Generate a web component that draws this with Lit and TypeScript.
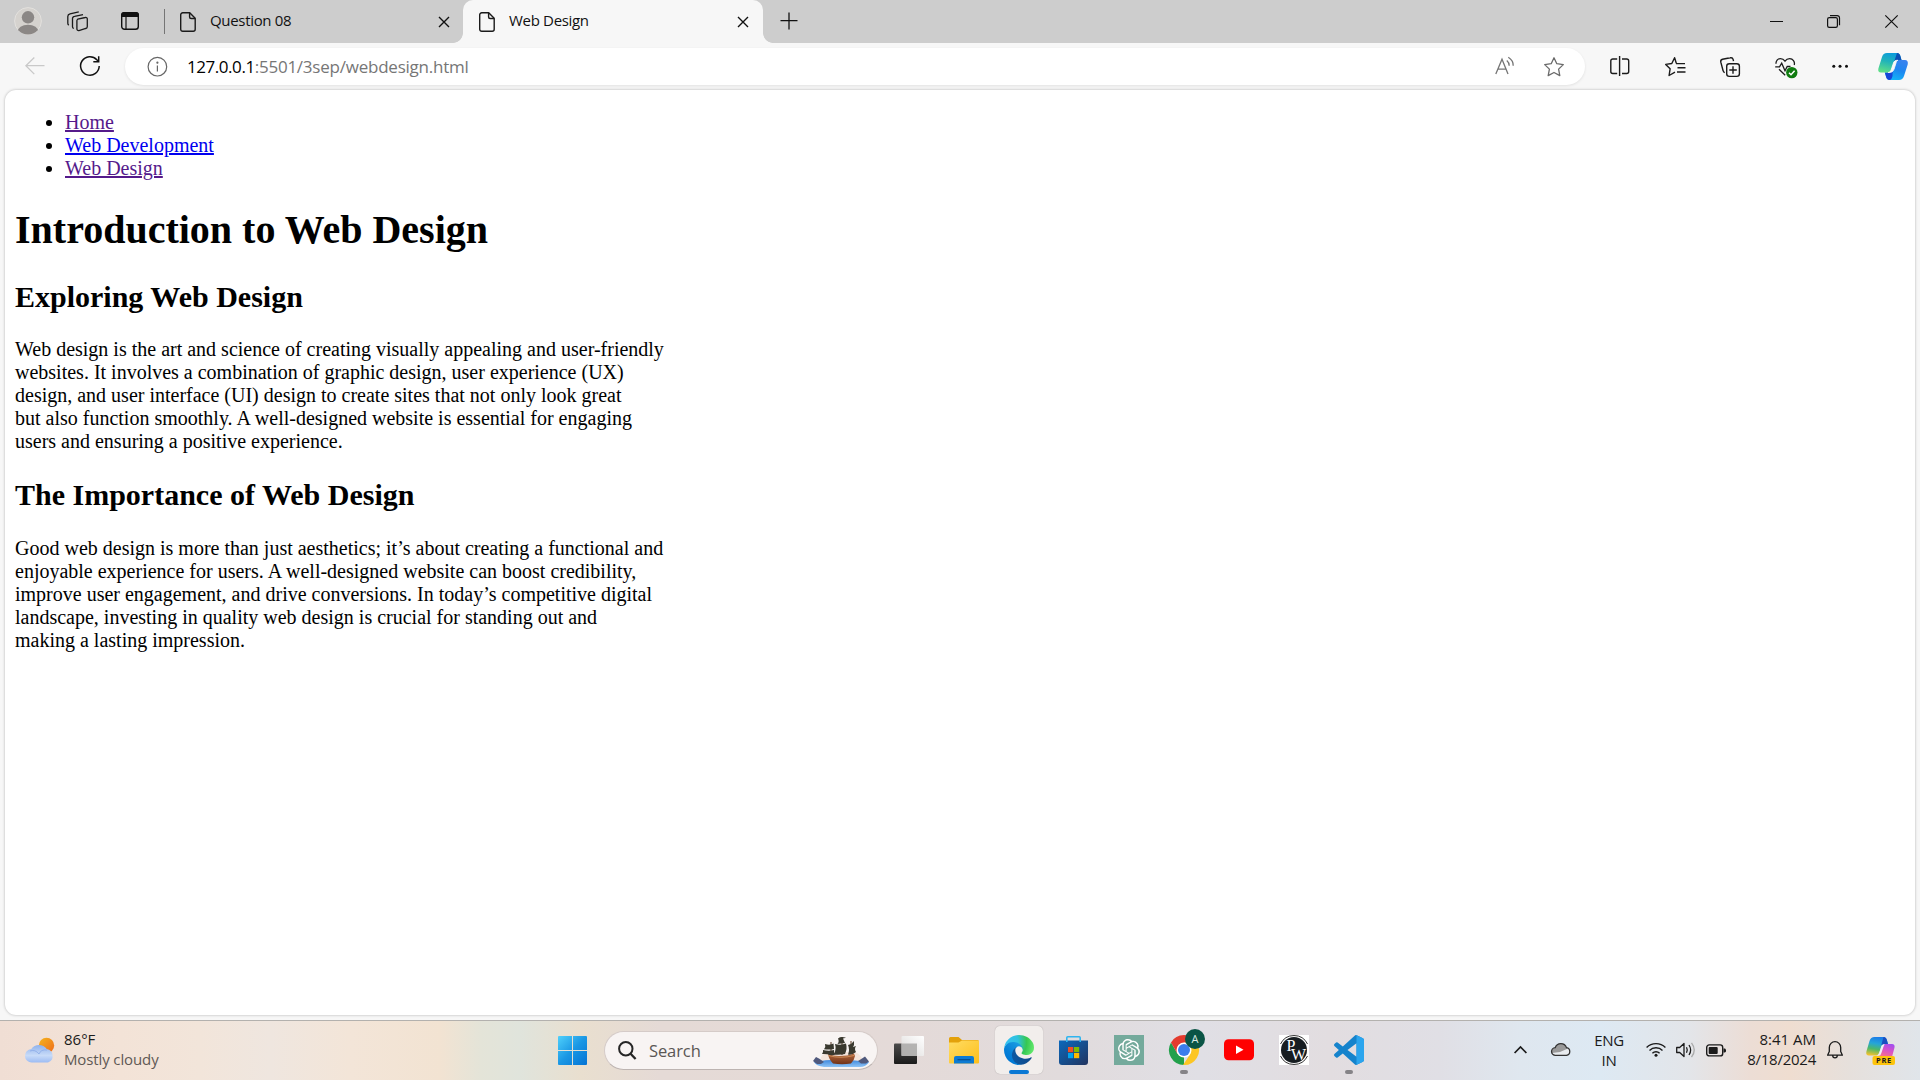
import { LitElement, html, css } from "lit";
import { customElement } from "lit/decorators.js";

const docIcon = html`<svg class="i-doc" viewBox="0 0 16 20" fill="none" stroke="#1b1b1b" stroke-width="1.4"><path d="M2.7.8h7l5.5 5.5v11a2 2 0 0 1-2 2H2.7a2 2 0 0 1-2-2v-14.500a2 2 0 0 1 2-2z"/><path d="M9.600 1v4a1.500 1.500 0 0 0 1.500 1.500h4"/></svg>`;
const tabClose = html`<svg class="i-tabx" viewBox="0 0 12 12" stroke="#111" stroke-width="1.400"><path d="M1 1l10 10M11 1L1 11"/></svg>`;

@customElement("browser-tabs")
class BrowserTabs extends LitElement {
  static styles = css`
    :host { display: flex; height: 43px; background: #cdcdcd; align-items: flex-start; font: 15px "Open Sans", "Noto Sans", sans-serif; color: #111; }
    svg { display: block; flex: none; overflow: visible; }
    .i-avatar { width: 28px; height: 28px; margin: 7px 0 0 14px; }
    .i-spaces { width: 21px; height: 21px; margin: 11px 0 0 25px; }
    .i-actions { width: 18px; height: 18px; margin: 12px 0 0 33px; }
    .sep { width: 1px; height: 25px; margin: 9px 0 0 25px; background: #757575; }
    .tab { display: flex; align-items: flex-start; height: 43px; box-sizing: border-box; padding-left: 16px; }
    .t1 { width: 298px; padding-left: 15px; }
    .t2 { width: 300px; position: relative; background: #f7f7f7; border-radius: 10px 10px 0 0; }
    .t2::before, .t2::after { content: ""; position: absolute; bottom: 0; width: 10px; height: 10px; }
    .t2::before { left: -10px; background: radial-gradient(circle at 0 0, #cdcdcd 9.500px, #f7f7f7 10.200px); }
    .t2::after { right: -10px; background: radial-gradient(circle at 100% 0, #cdcdcd 9.500px, #f7f7f7 10.200px); }
    .i-doc { width: 16px; height: 20px; margin-top: 12px; }
    .title { flex: 1; margin-left: 14px; line-height: 20px; padding-top: 10px; letter-spacing: -.32px; white-space: nowrap; }
    .i-tabx { width: 12px; height: 12px; margin: 16px 14px 0 0; }
    .t1 .i-tabx { margin-right: 13px; }
    .i-plus { width: 18px; height: 18px; margin: 12px 0 0 17px; }
    .fill { flex: 1; }
    .i-min { width: 13px; height: 13px; margin: 15px 0 0; }
    .i-max { width: 13px; height: 13px; margin: 15px 0 0 44px; }
    .i-close { width: 13px; height: 13px; margin: 15px 22px 0 45px; }
  `;
  render() {
    return html`
      <svg class="i-avatar" viewBox="0 0 28 28"><clipPath id="c"><circle cx="14" cy="14" r="13.500"/></clipPath><circle cx="14" cy="14" r="13.400" fill="#d5d2ce" stroke="#e3e1de"/><g clip-path="url(#c)" fill="#8b8785"><circle cx="14" cy="10.300" r="6.200"/><ellipse cx="14" cy="25" rx="10.500" ry="7.300"/></g></svg>
      <svg class="i-spaces" viewBox="0 0 21 21" fill="none" stroke="#1b1b1b" stroke-width="1.300"><path d="M10.700 8.200l7.600-1.700a1.600 1.600 0 0 1 2 1.600v7.400a2 2 0 0 1-1.500 2l-6.900 2a1.600 1.600 0 0 1-2-1.500v-7.800a2 2 0 0 1 .8-2z"/><path d="M16 3.600l-8.400 1.800A2.300 2.300 0 0 0 5.500 8v7.700q0 1.400 1.300 1.800"/><path d="M11.800.9L3 2.800A2.800 2.800 0 0 0 .8 5.500v6.700q0 1.200 1 1.900"/></svg>
      <svg class="i-actions" viewBox="0 0 18 18"><rect x=".7" y=".7" width="16.600" height="16.600" rx="2.800" fill="none" stroke="#111" stroke-width="1.400"/><path d="M0 5V3a3 3 0 0 1 3-3h12a3 3 0 0 1 3 3v2z" fill="#111"/><path d="M5 5v12.500" stroke="#111" stroke-width="1.200"/></svg>
      <div class="sep"></div>
      <div class="tab t1">${docIcon}<span class="title">Question 08</span>${tabClose}</div>
      <div class="tab t2">${docIcon}<span class="title">Web Design</span>${tabClose}</div>
      <svg class="i-plus" viewBox="0 0 18 18" stroke="#111" stroke-width="1.300"><path d="M9 .5v17M.5 8.600h17"/></svg>
      <div class="fill"></div>
      <svg class="i-min" viewBox="0 0 13 13" shape-rendering="crispEdges"><path d="M0 6h13v1H0z" fill="#111"/></svg>
      <svg class="i-max" viewBox="0 0 13 13" fill="none" stroke="#111" stroke-width="1.200"><rect x=".6" y="2.600" width="9.800" height="9.800" rx="1.600"/><path d="M3 .6h7.200a2.300 2.300 0 0 1 2.300 2.300v7.300"/></svg>
      <svg class="i-close" viewBox="0 0 13 13" stroke="#111" stroke-width="1.200"><path d="M.3.3l12.400 12.400M12.700.3L.3 12.700"/></svg>
    `;
  }
}

@customElement("browser-toolbar")
class BrowserToolbar extends LitElement {
  static styles = css`
    :host { display: flex; height: 47px; align-items: flex-start; background: #f7f7f7; }
    svg { display: block; flex: none; overflow: visible; }
    .i-back { width: 20px; height: 18px; margin: 14px 0 0 25px; }
    .i-reload { width: 20px; height: 20px; margin: 13px 0 0 35px; }
    .omni { display: flex; align-items: flex-start; width: 1460px; height: 37px; margin: 5px 0 0 25px; border-radius: 19px; background: #fff; box-shadow: 0 1px 3px rgba(0,0,0,.09); }
    .i-info { width: 20px; height: 20px; margin: 9px 0 0 22px; }
    .url { flex: 1; margin-left: 20px; padding-top: 6px; font: 17px/25px "Open Sans", "Noto Sans", sans-serif; letter-spacing: -.23px; color: #767676; white-space: nowrap; }
    .host { color: #000; letter-spacing: -.45px; }
    .i-read { width: 20px; height: 20px; margin: 8px 0 0; }
    .i-star { width: 20px; height: 20px; margin: 9px 21px 0 29px; }
    .i-split { width: 20px; height: 20px; margin: 13px 0 0 25px; }
    .i-favs { width: 21px; height: 20px; margin: 14px 0 0 35px; }
    .i-coll { width: 20px; height: 20px; margin: 14px 0 0 34px; }
    .i-heart { width: 23px; height: 21px; margin: 15px 0 0 35px; }
    .i-more { width: 16px; height: 4px; margin: 21px 0 0 34px; }
    .i-copilot { width: 30px; height: 27px; margin: 9.500px 0 0 30px; }
  `;
  render() {
    return html`
      <svg class="i-back" viewBox="0 0 20 18" fill="none" stroke="#c9c9c9" stroke-width="1.300"><path d="M19.500 8.700H.9M9.300.5L.9 8.700l8.400 8.400"/></svg>
      <svg class="i-reload" viewBox="0 0 20 20" fill="none" stroke="#111" stroke-width="1.500"><path d="M19.200 10A9.300 9.300 0 1 1 16.800 3.700L18.600 5.400M18.700.3v5.400h-5.400"/></svg>
      <div class="omni">
        <svg class="i-info" viewBox="0 0 20 20" fill="none" stroke="#666" stroke-width="1.200"><circle cx="10.400" cy="9.700" r="9.300"/><path d="M10.400 8.400v6"/><circle cx="10.400" cy="5.700" r=".5" fill="#666"/></svg>
        <span class="url"><span class="host">127.0.0.1</span>:5501/3sep/webdesign.html</span>
        <svg class="i-read" viewBox="0 0 20 20" fill="none" stroke="#757575" stroke-width="1.300"><path d="M.8 18L7 3.300 13 18M3 13.200h8M11.800 4.500q2.600 2.300 2.400 5.200M13.300 1.200q5.200 3.300 4.900 8.500"/></svg>
        <svg class="i-star" viewBox="0 0 20 20" fill="none" stroke="#6a6a6a" stroke-width="1.300" stroke-linejoin="round"><path d="M10 .8l2.800 5.900 6.500.9-4.700 4.500 1.200 6.500L10 15.500l-5.800 3.100 1.200-6.500L.7 7.600l6.500-.9z"/></svg>
      </div>
      <svg class="i-split" viewBox="0 0 20 20" fill="none" stroke="#1b1b1b" stroke-width="1.400"><path d="M7.200 3H2.800a2 2 0 0 0-2 2v10.500a2 2 0 0 0 2 2h4.400M12 3h4.700a2 2 0 0 1 2 2v10.500a2 2 0 0 1-2 2H12M9.600 0v20"/></svg>
      <svg class="i-favs" viewBox="0 0 21 20" fill="none" stroke="#1b1b1b" stroke-width="1.400" stroke-linejoin="round"><path d="M11.300 6.300L9.600.7 6.800 6.500.7 7.400l4.400 4.400-1 6.700L10 15.200M11 6.600h9M12.500 10.800H20.500M12 15h8.500"/></svg>
      <svg class="i-coll" viewBox="0 0 20 20" fill="none" stroke="#1b1b1b" stroke-width="1.400"><rect x="6.700" y="6.700" width="12.700" height="12.700" rx="2.600"/><path d="M13 9.300v7.500M9.300 13h7.500M4.700 15.700a3 3 0 0 1-1.600-2L.8 5.200a2.500 2.500 0 0 1 1.800-3L10.200.8a2.500 2.500 0 0 1 3 1.800l.3 1.500"/></svg>
      <svg class="i-heart" viewBox="0 0 23 21" fill="none" stroke="#1b1b1b" stroke-width="1.300"><path d="M1 5.800C.8 3 2.700.7 5.300.7c2 0 3.500.8 4.700 2.500C11.200 1.500 12.700.7 14.700.7c3.100 0 5.500 2.900 4.500 6.300M.2 8.800h4.300l2.200-3.600 3.300 7.500 2.200-4.200h3.300M4 11.200l6.200 6"/><circle cx="16.800" cy="14.600" r="5.700" fill="#107c10" stroke="none"/><path d="M14 14.800l2 1.900 3.600-3.900" stroke="#fff" stroke-width="1.500"/></svg>
      <svg class="i-more" viewBox="0 0 16 4" fill="#111"><circle cx="1.800" cy="2.200" r="1.500"/><circle cx="8" cy="2.200" r="1.500"/><circle cx="14.500" cy="2.200" r="1.500"/></svg>
      <svg class="i-copilot" viewBox="0 0 30 27">
        <defs>
          <linearGradient id="l" x1=".6" y1="0" x2=".3" y2="1"><stop offset="0" stop-color="#0c9bdc"/><stop offset=".45" stop-color="#21b3b9"/><stop offset="1" stop-color="#5fdf86"/></linearGradient>
          <linearGradient id="r" x1=".8" y1="0" x2=".4" y2="1"><stop offset="0" stop-color="#3a82ee"/><stop offset=".5" stop-color="#1d86f0"/><stop offset="1" stop-color="#13b4f7"/></linearGradient>
        </defs>
        <path d="M21 27H11.500C9.500 27 8.500 25.500 8 23.500L6.800 19.500H11c2 0 3-1 3.700-3L17 9c.6-1.500 1.800-2 3-2h7c2.200 0 3.400 2 2.700 4.500L26 23c-.8 2.500-2.500 4-5 4z" fill="url(#r)"/>
        <path d="M11.500 27C9.500 27 8.500 25.500 8 23.500L6.800 19.500H11c2 0 3-1 3.700-3L14.500 23c-.7 2.500-1.500 4-3 4z" fill="#1746d8"/>
        <path d="M9 0h10c2 0 3 1.500 3.500 3.500L23.500 7H19.500c-2.500 0-3.500 1-4 3L13.300 17c-.8 2-2 2.500-3.300 2.500H3C.8 19.500-.3 18 .4 15.500L4 4C4.800 1.500 6.500 0 9 0z" fill="url(#l)"/>
        <path d="M19 0c2 0 3 1.500 3.500 3.500L23.500 7H19.500c-1.500 0-2.600.5-3.300 1.500z" fill="#0a4fb4"/>
        <path d="M20 7.300c-2.700-.1-3.900.8-4.600 2.900l-2.200 6.600c-.7 2-1.700 2.700-3.200 2.700 3.400.3 5.200-.8 6.100-3.500l2-6.300c.4-1.500.9-2.200 1.900-2.400z" fill="#f7f7f7" stroke="#f7f7f7" stroke-width=".8"/>
      </svg>
    `;
  }
}

@customElement("web-document")
class WebDocument extends LitElement {
  static styles = css`
    :host { display: flow-root; width: 1910px; height: 925px; margin-left: 5px; box-sizing: border-box; padding: 21px 10px 0; background: #fff; border-radius: 11px; box-shadow: 0 0 3px rgba(0,0,0,.28); font: 20px/23px "Liberation Serif", "Times New Roman", serif; color: #000; }
    ul { margin: 0; padding-left: 50px; }
    a { color: #551a8b; text-decoration: underline; }
    a.fresh { color: #0000ee; }
    h1 { font-size: 40px; line-height: 46px; margin: 26.800px 0; }
    h2 { font-size: 30px; line-height: 34px; margin: 24.900px 0; }
    p { margin: 20px 0; white-space: nowrap; }
  `;
  render() {
    return html`
      <ul>
        <li><a>Home</a></li>
        <li><a class="fresh">Web Development</a></li>
        <li><a>Web Design</a></li>
      </ul>
      <h1>Introduction to Web Design</h1>
      <h2>Exploring Web Design</h2>
      <p>Web design is the art and science of creating visually appealing and user-friendly<br>websites. It involves a combination of graphic design, user experience (UX)<br>design, and user interface (UI) design to create sites that not only look great<br>but also function smoothly. A well-designed website is essential for engaging<br>users and ensuring a positive experience.</p>
      <h2>The Importance of Web Design</h2>
      <p>Good web design is more than just aesthetics; it’s about creating a functional and<br>enjoyable experience for users. A well-designed website can boost credibility,<br>improve user engagement, and drive conversions. In today’s competitive digital<br>landscape, investing in quality web design is crucial for standing out and<br>making a lasting impression.</p>
    `;
  }
}

@customElement("task-bar")
class TaskBar extends LitElement {
  static styles = css`
    :host { display: flex; align-items: flex-start; height: 60px; box-sizing: border-box; border-top: 1px solid #b3b1ae; font: 15px/20px "Open Sans", "Noto Sans", sans-serif; color: #1b1b1b;
      background: linear-gradient(90deg, #f0ded4 0, #f3e3d7 120px, #f2e5da 200px, #efe6df 270px, #f3e5d8 350px, #f2e3d2 440px, #e4e4d8 480px, #e0e4dc 520px, #e9dfcf 580px, #e5dad6 660px, #e4dad8 900px, #e1dbdc 1060px, #e0dfe5 1200px, #e2dde0 1330px, #e0dfe5 1440px, #dfe7ef 1520px, #dde9f3 1600px, #e3e5e9 1690px, #ecddd5 1750px, #efddd0 1790px, #e6e0dc 1850px, #e0e5ea 1920px); }
    svg { display: block; flex: none; overflow: visible; }
    .i-weather { width: 30px; height: 26px; margin: 16px 0 0 25px; }
    .weather { width: 495px; margin: 8px 0 0 9px; white-space: nowrap; }
    .weather div { height: 20px; }
    .dim { color: #5f5955; letter-spacing: -.12px; }
    .i-win { width: 29px; height: 29px; margin: 15px 0 0 -1px; }
    .search { display: flex; align-items: flex-start; width: 274px; height: 39px; margin: 10px 0 0 17px; box-sizing: border-box; border: 1px solid #d5cbc8; border-bottom-color: #bdb4b1; border-radius: 20px; background: #f8f4f3; }
    .i-glass { width: 18px; height: 19px; margin: 9px 0 0 13px; }
    .find { flex: 1; margin-left: 13px; padding-top: 7px; font-size: 16.500px; line-height: 23px; letter-spacing: -.1px; color: #5b5755; }
    .i-ship { width: 56px; height: 32px; margin: 4px 8px 0 0; }
    .i-view { width: 30px; height: 28px; margin: 15px 0 0 16px; }
    .i-folder { width: 30px; height: 27px; margin: 16px 0 0 25px; }
    .tile { display: flex; flex-direction: column; align-items: center; width: 48px; height: 48px; margin: 5px 0 0 16px; border-radius: 5px; background: #f2eeec; box-shadow: 0 0 1px rgba(0,0,0,.3); }
    .i-edge { width: 30px; height: 30px; margin-top: 9px; }
    .bar { width: 20px; height: 4px; margin-top: 5px; border-radius: 2px; background: #0b78d4; }
    .i-store { width: 29px; height: 29px; margin: 15px 0 0 16px; }
    .i-gpt { width: 30px; height: 30px; margin: 14px 0 0 26px; }
    .run { display: flex; flex-direction: column; align-items: center; width: 30px; margin: 14px 0 0 25px; }
    .i-app { width: 30px; height: 30px; }
    .dot { width: 8px; height: 4px; margin-top: 5px; border-radius: 2px; background: #858387; }
    .fill { flex: 1; }
    .i-up { width: 13px; height: 8px; margin: 25px 1px 0 0; }
    .i-cloud { width: 20px; height: 14px; margin: 21px 0 0 23px; }
    .lang { width: 40px; margin: 9px 0 0 18px; text-align: center; letter-spacing: -.3px; }
    .i-wifi { width: 20px; height: 15px; margin: 21px 0 0 17px; }
    .i-sound { width: 20px; height: 16px; margin: 21px 0 0 10px; }
    .i-batt { width: 20px; height: 13px; margin: 23px 0 0 10px; }
    .clock { width: 81px; margin: 8px 0 0 9px; text-align: right; white-space: nowrap; }
    .date { letter-spacing: -.25px; }
    .i-bell { width: 16px; height: 18px; margin: 20px 0 0 11px; }
    .i-pre { width: 29px; height: 28px; margin: 16px 25px 0 23px; }
  `;
  render() {
    return html`
      <svg class="i-weather" viewBox="0 0 30 26">
        <defs>
          <linearGradient id="sun" x1="0" y1="0" x2="1" y2="1"><stop offset="0" stop-color="#f5b51c"/><stop offset="1" stop-color="#ee6a1c"/></linearGradient>
          <linearGradient id="cl" x1="0" y1="0" x2="0" y2="1"><stop offset="0" stop-color="#8fb2ec"/><stop offset=".6" stop-color="#c8dbf8"/><stop offset="1" stop-color="#9dbcf3"/></linearGradient>
        </defs>
        <circle cx="21.500" cy="8.500" r="7.700" fill="url(#sun)"/>
        <path d="M7 25.500a6.700 6.700 0 0 1-.7-13.400A9.200 9.200 0 0 1 21.700 12 7 7 0 0 1 23 25.500z" fill="url(#cl)"/>
        <path d="M5 14q5-2 9 3 2-5 8-4" fill="none" stroke="#86a7e6" stroke-width="1" opacity=".7"/>
      </svg>
      <div class="weather"><div>86°F</div><div class="dim">Mostly cloudy</div></div>
      <svg class="i-win" viewBox="0 0 29 29"><defs><linearGradient id="w" gradientUnits="userSpaceOnUse" x1="0" y1="0" x2="29" y2="29"><stop offset="0" stop-color="#4fd0fb"/><stop offset=".5" stop-color="#1a97e4"/><stop offset="1" stop-color="#0473d4"/></linearGradient></defs><path fill="url(#w)" d="M1 0h13v14H0V1a1 1 0 0 1 1-1zM15 0h13a1 1 0 0 1 1 1v13H15zM0 15h14v14H1a1 1 0 0 1-1-1zM15 15h14v13a1 1 0 0 1-1 1H15z"/></svg>
      <div class="search">
        <svg class="i-glass" viewBox="0 0 18 19" fill="none" stroke="#262626" stroke-width="2"><circle cx="7.800" cy="7.800" r="6.700"/><path d="M12.600 12.800l5 5.200" stroke-width="2.300"/></svg>
        <span class="find">Search</span>
        <svg class="i-ship" viewBox="0 0 56 32">
          <defs><linearGradient id="sea" x1="0" y1="0" x2="0" y2="1"><stop offset="0" stop-color="#3b86dd"/><stop offset="1" stop-color="#8fc4f5"/></linearGradient><linearGradient id="hull" x1="0" y1="0" x2="0" y2="1"><stop offset="0" stop-color="#b5673a"/><stop offset="1" stop-color="#6f3219"/></linearGradient></defs>
          <path d="M7 25q1-8 9-9h26q7 3 8 10z" fill="#f4e5dc"/>
          <path d="M1 26q13-2.500 27-2.200T56 26q-3 5-9 5H11q-8-1-10-5z" fill="url(#sea)"/>
          <path d="M0 25l3-4 3 1.500 5 3.500-3 2H4zM45 25l4-2.500 3-2 4 5-3 2h-5z" fill="#50597c"/>
          <path d="M15 18q5 2 11 2 9 0 15-2.500l1 2.500q-1 5-4 7.500-9 1.500-18 0-4-4-5-9.500z" fill="url(#hull)"/>
          <path d="M15.500 19.500q12 3.500 25.500 0" fill="none" stroke="#d69a63" stroke-width=".8"/>
          <path d="M18 6v13M29 1v18M38 5v13" stroke="#5a3b26" stroke-width="1"/>
          <path d="M12 8q5 1.500 8.500-.5l.5 5.500q-5 1-10 .2 2-2.500 1-5.200zM10 14q6 1.500 11 0l.5 5q-5 .5-7-.7-2-.5-5.500-.3 1.500-2 1-4zM22 8q6 1.500 11-.5 1.500 5-1 10.500-5 1-11 .5 2.500-5.500 1-10.500zM25 2.500q3-2.500 8-.7l-3 .8 2 4.400-7.500 1q2-2.500.5-5.500zM35 9q4-1 6-4 .5 4-1 6l3-1q-2 3 0 6-4 3.500-8 2.500 2-5 0-9.500z" fill="#3a392f"/>
        </svg>
      </div>
      <svg class="i-view" viewBox="0 0 30 28"><defs><linearGradient id="v" x1="0" y1="0" x2="0" y2="1"><stop offset="0" stop-color="#4c4b4b"/><stop offset="1" stop-color="#1b1b1b"/></linearGradient><linearGradient id="v2" x1="1" y1="0" x2="0" y2="1"><stop offset="0" stop-color="#fff"/><stop offset="1" stop-color="#dcdad9"/></linearGradient></defs><rect y="7.500" width="23" height="20.500" rx="1" fill="url(#v)"/><rect x="7.500" width="22.500" height="20" rx="1" fill="url(#v2)"/><path d="M7.500 7.500H23V20H7.500z" fill="#a9a8a7" opacity=".85"/></svg>
      <svg class="i-folder" viewBox="0 0 30 27"><defs><linearGradient id="f" x1="0" y1="0" x2="1" y2="1"><stop offset="0" stop-color="#ffdc63"/><stop offset="1" stop-color="#fdbf1b"/></linearGradient></defs><path d="M0 1.500A1.500 1.500 0 0 1 1.500 0h8l3.500 3h15.500A1.500 1.500 0 0 1 30 4.500V8H0z" fill="#e3a10b"/><path d="M0 5.500h9.500L13 3.500h16a1 1 0 0 1 1 1v21a1 1 0 0 1-1 1H1a1 1 0 0 1-1-1z" fill="url(#f)"/><path d="M5 26.500V21a2 2 0 0 1 2-2h16a2 2 0 0 1 2 2v5.500z" fill="#0d7bd3"/><path d="M8.500 22.700h13" stroke="#084d8c" stroke-width="1.200"/></svg>
      <div class="tile">
        <svg class="i-edge" viewBox="0 0 256 256">
          <defs>
            <linearGradient id="e1" gradientUnits="userSpaceOnUse" x1="63" y1="178" x2="241" y2="178"><stop offset="0" stop-color="#0c59a4"/><stop offset="1" stop-color="#114a8b"/></linearGradient>
            <linearGradient id="e2" gradientUnits="userSpaceOnUse" x1="157" y1="100" x2="46" y2="222"><stop offset="0" stop-color="#1b9de2"/><stop offset=".16" stop-color="#1595df"/><stop offset=".67" stop-color="#0680d7"/><stop offset="1" stop-color="#0078d4"/></linearGradient>
            <radialGradient id="e3" gradientUnits="userSpaceOnUse" cx="30" cy="65" r="240"><stop offset="0" stop-color="#35c1f1"/><stop offset=".4" stop-color="#2fc2df"/><stop offset=".7" stop-color="#36c752"/><stop offset="1" stop-color="#66eb6e"/></radialGradient>
          </defs>
          <g transform="translate(-4.630 -4.920)">
            <path fill="url(#e1)" d="M235.680 195.460a93.730 93.730 0 0 1-10.540 4.710 101.870 101.870 0 0 1-35.900 6.460c-47.320 0-88.540-32.550-88.540-74.320A31.480 31.480 0 0 1 117.130 105c-42.800 1.800-53.800 46.400-53.800 72.530 0 73.880 68.090 81.370 82.760 81.370 7.910 0 19.840-2.300 27-4.560l1.310-.44a128.340 128.340 0 0 0 66.600-52.800 4 4 0 0 0-5.320-5.640z"/>
            <path fill="url(#e2)" d="M110.340 246.340A79.200 79.200 0 0 1 87.600 225a80.720 80.720 0 0 1 29.530-120c3.120-1.470 8.450-4.130 15.540-4a32.350 32.350 0 0 1 25.690 13 31.880 31.880 0 0 1 6.360 18.660c0-.21 24.460-79.600-80-79.600-43.900 0-80 41.660-80 78.210a130.150 130.150 0 0 0 12.110 56 128 128 0 0 0 156.380 67.110 75.550 75.550 0 0 1-62.780-8z"/>
            <path fill="url(#e3)" d="M156.940 153.460c-.81 1.050-3.300 2.500-3.300 5.660 0 2.610 1.700 5.120 4.720 7.230 14.380 10 41.490 8.680 41.560 8.680a59.560 59.560 0 0 0 30.270-8.350 61.380 61.380 0 0 0 30.430-52.880c.26-22.410-8-37.310-11.340-43.910-21.190-41.440-66.920-65.280-116.670-65.280a128 128 0 0 0-128 126.200c.48-36.540 36.800-66.050 80-66.050 3.500 0 23.460.34 42 10.070 16.340 8.580 24.900 18.940 30.850 29.210 6.180 10.670 7.280 24.150 7.280 29.520s-2.740 13.330-7.800 19.900z"/>
          </g>
        </svg>
        <div class="bar"></div>
      </div>
      <svg class="i-store" viewBox="0 0 29 29"><defs><linearGradient id="s" x1="0" y1="0" x2="1" y2="1"><stop offset="0" stop-color="#0b69bd"/><stop offset="1" stop-color="#22345f"/></linearGradient></defs><path d="M0 4.500h29V26a3 3 0 0 1-3 3H3a3 3 0 0 1-3-3z" fill="url(#s)"/><path d="M7.800 6V1.800a1 1 0 0 1 1-1h11.400a1 1 0 0 1 1 1V6" fill="none" stroke="#2fb4ef" stroke-width="1.600"/><path d="M9 11h5.200v5.200H9z" fill="#f25022"/><path d="M15 11h5.200v5.200H15z" fill="#7fba00"/><path d="M9 17h5.200v5.200H9z" fill="#00a4ef"/><path d="M15 17h5.200v5.200H15z" fill="#ffb900"/></svg>
      <svg class="i-gpt" viewBox="0 0 30 30"><path d="M0 0h30v30H0z" fill="#74aa9c"/><path transform="translate(4 4) scale(.917)" fill="#fff" d="M22.282 9.821a5.985 5.985 0 0 0-.516-4.911 6.046 6.046 0 0 0-6.510-2.900A6.065 6.065 0 0 0 4.981 4.182a5.985 5.985 0 0 0-3.998 2.900 6.046 6.046 0 0 0 .743 7.097 5.980 5.980 0 0 0 .511 4.911 6.051 6.051 0 0 0 6.515 2.900A5.985 5.985 0 0 0 13.260 24a6.056 6.056 0 0 0 5.772-4.206 5.989 5.989 0 0 0 3.998-2.900 6.056 6.056 0 0 0-.748-7.073zm-9.022 12.608a4.476 4.476 0 0 1-2.876-1.041l.142-.080 4.778-2.758a.795.795 0 0 0 .393-.681v-6.737l2.020 1.169a.071.071 0 0 1 .038.052v5.583a4.504 4.504 0 0 1-4.495 4.494zm-9.661-4.125a4.471 4.471 0 0 1-.535-3.014l.142.085 4.783 2.758a.771.771 0 0 0 .781 0l5.843-3.369v2.332a.080.080 0 0 1-.033.062L9.740 19.950a4.499 4.499 0 0 1-6.141-1.646zM2.341 7.896a4.485 4.485 0 0 1 2.366-1.973V11.600a.766.766 0 0 0 .388.677l5.814 3.354-2.020 1.169a.076.076 0 0 1-.071 0l-4.830-2.787A4.504 4.504 0 0 1 2.341 7.872zm16.596 3.856L13.104 8.364 15.119 7.200a.076.076 0 0 1 .071 0l4.830 2.791a4.494 4.494 0 0 1-.677 8.104v-5.677a.790.790 0 0 0-.407-.667zm2.011-3.023l-.142-.085-4.774-2.782a.776.776 0 0 0-.785 0L9.409 9.230V6.897a.066.066 0 0 1 .028-.062l4.830-2.787a4.499 4.499 0 0 1 6.680 4.660zM8.307 12.863l-2.020-1.164a.080.080 0 0 1-.038-.057V6.074a4.499 4.499 0 0 1 7.376-3.454l-.142.081L8.704 5.459a.795.795 0 0 0-.393.681zm1.098-2.365l2.602-1.500 2.607 1.500v2.999l-2.597 1.500-2.607-1.500z"/></svg>
      <div class="run">
        <svg class="i-app" viewBox="0 0 30 30">
          <path d="M2 7.500L8.500 18.800 15 22V30A15 15 0 0 1 2 7.500z" fill="#22a04b"/><path d="M28 7.500A15 15 0 0 1 14 30l7.500-11.200L15 8.200V7.500z" fill="#fcc624"/><path d="M2 7.500A15 15 0 0 1 28 7.500H15L8.500 18.800z" fill="#e33b2e"/>
          <circle cx="15" cy="15" r="7.500" fill="#fff"/><circle cx="15" cy="15" r="6" fill="#3b7ded"/>
          <circle cx="26" cy="4" r="10" fill="#0a5445"/><text x="26" y="8" font-size="11" text-anchor="middle" fill="#dcebe6" font-family="Open Sans, sans-serif">A</text>
        </svg>
        <div class="dot"></div>
      </div>
      <div class="run"><svg class="i-app" viewBox="0 0 30 30"><rect y="4.300" width="30" height="21" rx="4.500" fill="#f00"/><path d="M12 10.500v8.600l7.500-4.300z" fill="#fff"/></svg></div>
      <div class="run"><svg class="i-app" viewBox="0 0 30 30"><path d="M0 0h30v30H0z" fill="#fff"/><circle cx="15" cy="15" r="13" fill="#171d21"/><path d="M1.500 9A15 15 0 0 1 28.500 9M1.500 21A15 15 0 0 0 28.500 21" fill="none" stroke="#333" stroke-width="1"/><text x="7.500" y="16" font-size="16" fill="#fff" font-family="Liberation Serif, serif">P<tspan x="12" y="25">W</tspan></text></svg></div>
      <div class="run">
        <svg class="i-app" viewBox="0 0 24 24"><path fill="#1583cc" d="M23.150 2.587L18.210.21a1.494 1.494 0 0 0-1.705.29l-9.460 8.630-4.120-3.128a.999.999 0 0 0-1.276.057L.327 7.261A1 1 0 0 0 .326 8.740L3.899 12 .326 15.260a1 1 0 0 0 .001 1.479L1.650 17.940a.999.999 0 0 0 1.276.057l4.120-3.128 9.460 8.630a1.492 1.492 0 0 0 1.704.29l4.942-2.377A1.500 1.500 0 0 0 24 20.060V3.939a1.500 1.500 0 0 0-.85-1.352zm-5.146 14.861L10.826 12l7.178-5.448v10.896z"/><path fill="#2ba5ee" d="M18 .15l5.150 2.437a1.500 1.500 0 0 1 .85 1.352V20.060a1.500 1.500 0 0 1-.85 1.352L18 23.850z"/></svg>
        <div class="dot"></div>
      </div>
      <div class="fill"></div>
      <svg class="i-up" viewBox="0 0 13 8" fill="none" stroke="#1b1b1b" stroke-width="1.700"><path d="M.6 7l5.900-6 5.900 6"/></svg>
      <svg class="i-cloud" viewBox="0 0 20 14"><path d="M4.500 13.300a3.800 3.800 0 0 1-.3-7.600A6 6 0 0 1 15.500 5.600a3.900 3.900 0 0 1 0 7.700z" fill="#e8ebee"/><path d="M4.300 5.700A6 6 0 0 1 15.500 5.600l2 .6L9 10 1 11Q-.3 6.500 4.300 5.700z" fill="#9a9a9a"/><path d="M4.500 13.300a3.800 3.800 0 0 1-.3-7.600A6 6 0 0 1 15.500 5.600a3.900 3.900 0 0 1 0 7.700z" fill="none" stroke="#333" stroke-width="1.300"/></svg>
      <div class="lang">ENG<br>IN</div>
      <svg class="i-wifi" viewBox="0 0 20 15" fill="none" stroke="#1b1b1b" stroke-width="1.400"><path d="M.6 5.500a13.300 13.300 0 0 1 18.800 0M3.500 8.500a9.200 9.200 0 0 1 13 0M6.400 11.300a5.100 5.100 0 0 1 7.200 0"/><circle cx="10" cy="13.200" r="1.500" fill="#1b1b1b" stroke="none"/></svg>
      <svg class="i-sound" viewBox="0 0 20 16" fill="none" stroke="#1b1b1b" stroke-width="1.300"><path d="M.7 5.500h3L8 1.500v13l-4.300-4h-3z" stroke-linejoin="round"/><path d="M10.500 5.300q1.500 2.700 0 5.400M13 3q3.300 5 0 10"/><path d="M15.500.8q5.500 7.200 0 14.400" stroke="#aaa"/></svg>
      <svg class="i-batt" viewBox="0 0 20 13"><rect x=".7" y=".9" width="16" height="11" rx="2.500" fill="none" stroke="#1b1b1b" stroke-width="1.400"/><rect x="2.700" y="2.900" width="9" height="7" rx="1" fill="#1b1b1b"/><path d="M17.500 4.500h1.500l1 1v2l-1 1h-1.500z" fill="#1b1b1b"/></svg>
      <div class="clock">8:41 AM<br><span class="date">8/18/2024</span></div>
      <svg class="i-bell" viewBox="0 0 16 18" fill="none" stroke="#1b1b1b" stroke-width="1.300" stroke-linejoin="round"><path d="M8 .7a5.700 5.700 0 0 1 5.700 5.700v4l1.700 3.800H.6l1.700-3.800v-4A5.700 5.700 0 0 1 8 .7zM5.700 14.500a2.300 2.300 0 0 0 4.600 0"/></svg>
      <svg class="i-pre" viewBox="0 0 29 28">
        <defs>
          <linearGradient id="p1" x1=".5" y1="0" x2=".3" y2="1"><stop offset="0" stop-color="#1a7be8"/><stop offset=".35" stop-color="#25a5d8"/><stop offset=".65" stop-color="#4cb86a"/><stop offset="1" stop-color="#f3c22e"/></linearGradient>
          <linearGradient id="p2" x1=".8" y1="0" x2=".4" y2="1"><stop offset="0" stop-color="#a04ff0"/><stop offset=".5" stop-color="#d852c8"/><stop offset="1" stop-color="#f7708a"/></linearGradient>
        </defs>
        <path d="M12 20l5-11c.6-1.500 1.500-2 3-2h6c2 0 3 1.500 2.500 3.500L26 20z" fill="url(#p2)"/>
        <path d="M8.500 0h9c2 0 3 1.500 3.500 3.500L22 7h-3.500c-2 0-3 1-3.500 3l-2 6c-.8 2-2 2.500-3.300 2.500H3C.8 18.500-.3 17 .4 14.500L3.500 4C4.300 1.500 6 0 8.500 0z" fill="url(#p1)"/>
        <path d="M17.500 0c2 0 3 1.500 3.500 3.500L22 7h-3.500c-1.500 0-2.600.5-3.300 1.500z" fill="#1a4fc0"/>
        <path d="M18.500 7.500c-2 0-2.700 1-3.300 2.800l-2 6-1.500 2.200h2.500l1.200-2.500 2-6z" fill="#eef0f5"/>
        <rect x="6.500" y="19" width="22.500" height="9" rx="2" fill="#fdc40c"/>
        <text x="18" y="26.300" font-size="7.500" font-weight="700" letter-spacing=".7" text-anchor="middle" fill="#1b1b1b" font-family="Open Sans, sans-serif">PRE</text>
      </svg>
    `;
  }
}

@customElement("app-root")
class AppRoot extends LitElement {
  static styles = css`
    :host { display: flex; flex-direction: column; width: 1920px; height: 1080px; overflow: hidden; background: #f7f7f7; }
    .gap { flex: 1; }
  `;
  render() {
    return html`<browser-tabs></browser-tabs><browser-toolbar></browser-toolbar><web-document></web-document><div class="gap"></div><task-bar></task-bar>`;
  }
}
